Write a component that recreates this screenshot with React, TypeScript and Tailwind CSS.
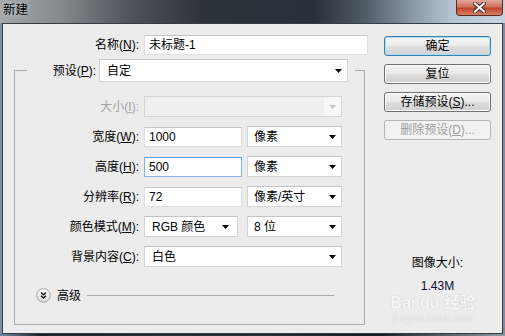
import type { ReactNode } from "react";

const font = "font-['Liberation_Sans','Noto_Sans_CJK_SC',sans-serif]";

function Label({ text, k, disabled }: { text: string; k: string; disabled?: boolean }) {
  return (
    <span className={disabled ? "text-[#a3a3a3]" : "text-black"}>
      {text}(<u className="underline-offset-[1px]">{k}</u>):
    </span>
  );
}

function Arrow({ disabled }: { disabled?: boolean }) {
  return (
    <svg width="7" height="4" viewBox="0 0 7 4" className="shrink-0">
      <path d="M0 0h7L3.5 4z" fill={disabled ? "#c6c6c6" : "#000"} />
    </svg>
  );
}

function Select({ value, className }: { value: string; className: string }) {
  return (
    <div
      className={`flex items-center justify-between bg-white border border-[#d4d4d4] border-t-[#c4c4c4] pl-[6px] pr-[5px] ${className}`}
    >
      <span>{value}</span>
      <Arrow />
    </div>
  );
}

function Input({ value, className, focused }: { value: string; className: string; focused?: boolean }) {
  return (
    <div
      className={`flex items-center bg-white border pl-[4px] h-[20px] ${
        focused ? "border-[#7eb4ea] border-t-[#569de5]" : "border-[#dedede] border-t-[#c2c2c2]"
      } ${className}`}
    >
      {value}
    </div>
  );
}

function Row({ label, children }: { label: ReactNode; children: ReactNode }) {
  return (
    <div className="flex items-center h-[21px]">
      <div className="w-[125px] text-right pr-px">{label}</div>
      <div className="ml-[4px] flex items-center">{children}</div>
    </div>
  );
}

function Button({ children, kind }: { children: ReactNode; kind?: "default" | "disabled" }) {
  const base = "h-[20px] w-[107px] rounded-[3px] border flex items-center justify-center";
  if (kind === "default")
    return (
      <div
        className={`${base} border-[#3c7fb1] bg-[linear-gradient(#f4f4f4_0%,#ececec_50%,#dfdfdf_50%,#d3d3d3_100%)] shadow-[inset_0_0_0_1px_#a6ddf8]`}
      >
        {children}
      </div>
    );
  if (kind === "disabled")
    return <div className={`${base} border-[#b3b6b8] bg-[#f2f2f2] text-[#9d9d9d]`}>{children}</div>;
  return (
    <div
      className={`${base} border-[#707070] bg-[linear-gradient(#f2f2f2_0%,#ebebeb_50%,#dddddd_50%,#cfcfcf_100%)] shadow-[inset_0_0_0_1px_#fbfbfb]`}
    >
      {children}
    </div>
  );
}

export default function App() {
  return (
    <div className={`w-[505px] h-[336px] overflow-hidden bg-[#7f8d9a] text-[12px] leading-[16px] ${font}`}>
      {/* title bar */}
      <div className="h-[23px] flex justify-between bg-[linear-gradient(90deg,#a3a7ab_0%,#858a8f_12%,#50565d_25%,#2c333b_40%,#28313a_62%,#4f5964_72%,#8d9aa7_82%,#b8c6d3_90%,#c6d3de_100%)]">
        <div className="pl-[3px] pt-[2px] text-[12.5px] text-black [text-shadow:0_0_6px_rgba(255,255,255,0.7)]">
          新建
        </div>
        <div className="mr-[2px] w-[47px] h-[16px] rounded-b-[4px] border border-t-0 border-[#5a2a22] bg-[linear-gradient(#e4a99d_0%,#d16f5c_45%,#c2432c_55%,#d5806b_100%)] flex items-center justify-center">
          <svg width="13" height="11" viewBox="0 0 13 11">
            <path d="M2 1.5L11 9.5M11 1.5L2 9.5" stroke="#3d2a28" strokeWidth="4" strokeLinecap="square" />
            <path d="M2 1.5L11 9.5M11 1.5L2 9.5" stroke="#ffffff" strokeWidth="2" strokeLinecap="square" />
          </svg>
        </div>
      </div>

      {/* client */}
      <div className="relative mx-[2px] h-[311px] border border-[#353c45] bg-[#ececec] flex">
        <div className="w-[365px]">
          <div className="mt-[11px] flex items-center h-[20px]">
            <div className="w-[137px] text-right pr-px">
              <Label text="名称" k="N" />
            </div>
            <Input value="未标题-1" className="ml-[4px] w-[224px]" />
          </div>

          <fieldset className="mt-[4px] ml-[11px] w-[351px] border border-[#a9a9a9] pb-[21px]">
            <legend className="ml-[12px] w-[328px] flex items-start">
              <div className="w-[70px] text-right pr-px h-[23px] flex items-center justify-end">
                <Label text="预设" k="P" />
              </div>
              <div className="ml-[2px] -mb-[5px]">
                <Select value="自定" className="w-[249px] h-[23px] pl-[7px] pr-[5px]" />
              </div>
            </legend>

            <div className="mt-[14px] flex flex-col gap-[9px]">
              <Row label={<Label text="大小" k="I" disabled />}>
                <div className="w-[198px] h-[21px] flex border border-[#d4d4d4] bg-[#efefef]">
                  <div className="flex-1" />
                  <div className="w-[17px] bg-[#f7f7f7] flex items-center justify-center">
                    <Arrow disabled />
                  </div>
                </div>
              </Row>
              <Row label={<Label text="宽度" k="W" />}>
                <Input value="1000" className="w-[98px]" />
                <Select value="像素" className="ml-[5px] w-[95px] h-[21px]" />
              </Row>
              <Row label={<Label text="高度" k="H" />}>
                <Input value="500" className="w-[98px]" focused />
                <Select value="像素" className="ml-[5px] w-[95px] h-[21px]" />
              </Row>
              <Row label={<Label text="分辨率" k="R" />}>
                <Input value="72" className="w-[98px]" />
                <Select value="像素/英寸" className="ml-[5px] w-[95px] h-[21px]" />
              </Row>
              <Row label={<Label text="颜色模式" k="M" />}>
                <Select value="RGB 颜色" className="w-[94px] h-[21px] pl-[7px] pr-[8px]" />
                <Select value="8 位" className="ml-[9px] w-[95px] h-[21px]" />
              </Row>
              <Row label={<Label text="背景内容" k="C" />}>
                <Select value="白色" className="w-[198px] h-[21px] pl-[7px]" />
              </Row>
            </div>

            <div className="mt-[21px] ml-[21px] h-[15px] flex items-center">
              <svg width="15" height="15" viewBox="0 0 15 15" className="shrink-0">
                <defs>
                  <linearGradient id="adv" x1="0" y1="0" x2="0" y2="1">
                    <stop offset="0" stopColor="#ffffff" />
                    <stop offset="1" stopColor="#d9d9d9" />
                  </linearGradient>
                </defs>
                <circle cx="7.5" cy="7.5" r="6.8" fill="url(#adv)" stroke="#9a9a9a" strokeWidth="0.9" />
                <path d="M5 4.5l2.5 2.3 2.5-2.3M5 7.8l2.5 2.3 2.5-2.3" fill="none" stroke="#111" strokeWidth="1.3" />
              </svg>
              <span className="ml-[6px]">高级</span>
              <div className="ml-[6px] w-[247px] border-t border-[#a8a8a8]" />
            </div>
          </fieldset>
        </div>

        <div className="ml-[16px] w-[107px] flex flex-col">
          <div className="mt-[12px] flex flex-col gap-[8px]">
            <Button kind="default">确定</Button>
            <Button>复位</Button>
            <Button>
              存储预设(<u className="underline-offset-[1px]">S</u>)...
            </Button>
            <Button kind="disabled">
              删除预设(<u className="underline-offset-[1px]">D</u>)...
            </Button>
          </div>
          <div className="mt-[115px] text-center">图像大小:</div>
          <div className="mt-[7px] text-center text-[#0c0c30]">1.43M</div>
        </div>

        {/* baidu watermark */}
        <div className="absolute left-[380px] top-[270px] w-[100px] flex flex-col items-center whitespace-nowrap text-[#f6f6f6] [text-shadow:0_0_1px_#b9b9b9] pointer-events-none">
          <div className="text-[16px] leading-[18px] font-bold">Bai du 经验</div>
          <div className="text-[10px] leading-[12px] mt-[1px]">jingyan.baidu.com</div>
        </div>
      </div>

      <div className="h-[2px] bg-[linear-gradient(90deg,#6d8aa7_0%,#1f2429_8%,#2c3137_45%,#1b1f24_75%,#8d99a4_100%)]" />
    </div>
  );
}
